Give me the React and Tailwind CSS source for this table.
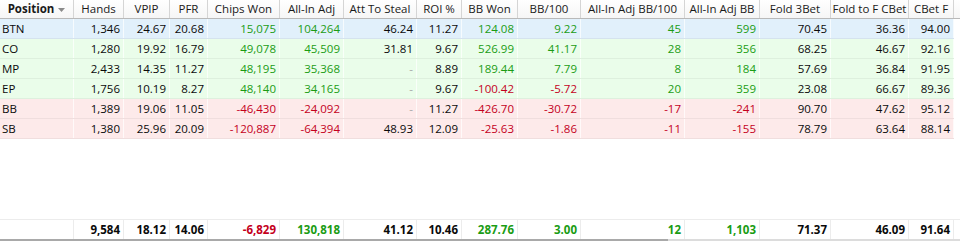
import React from "react";

const cols = [
  { label: "Position", w: "w-[74px]" },
  { label: "Hands", w: "w-[50px]" },
  { label: "VPIP", w: "w-[46px]" },
  { label: "PFR", w: "w-[38px]" },
  { label: "Chips Won", w: "w-[72px]" },
  { label: "All-In Adj", w: "w-[64px]" },
  { label: "Att To Steal", w: "w-[73px]" },
  { label: "ROI %", w: "w-[45px]" },
  { label: "BB Won", w: "w-[56px]" },
  { label: "BB/100", w: "w-[63px]" },
  { label: "All-In Adj BB/100", w: "w-[104px]" },
  { label: "All-In Adj BB", w: "w-[75px]" },
  { label: "Fold 3Bet", w: "w-[71px]" },
  { label: "Fold to F CBet", w: "w-[78px]" },
  { label: "CBet F", w: "w-[45px]" },
];

// g = green, r = red, d = dash, plain = black
const rows = [
  {
    pos: "BTN",
    bg: "bg-[#e1f0fb]",
    cells: ["1,346", "24.67", "20.68", "g15,075", "g104,264", "46.24", "11.27", "g124.08", "g9.22", "g45", "g599", "70.45", "36.36", "94.00"],
  },
  {
    pos: "CO",
    bg: "bg-[#eafdea]",
    cells: ["1,280", "19.92", "16.79", "g49,078", "g45,509", "31.81", "9.67", "g526.99", "g41.17", "g28", "g356", "68.25", "46.67", "92.16"],
  },
  {
    pos: "MP",
    bg: "bg-[#eafdea]",
    cells: ["2,433", "14.35", "11.27", "g48,195", "g35,368", "d", "8.89", "g189.44", "g7.79", "g8", "g184", "57.69", "36.84", "91.95"],
  },
  {
    pos: "EP",
    bg: "bg-[#eafdea]",
    cells: ["1,756", "10.19", "8.27", "g48,140", "g34,165", "d", "9.67", "r-100.42", "r-5.72", "g20", "g359", "23.08", "66.67", "89.36"],
  },
  {
    pos: "BB",
    bg: "bg-[#fdeaea]",
    cells: ["1,389", "19.06", "11.05", "r-46,430", "r-24,092", "d", "11.27", "r-426.70", "r-30.72", "r-17", "r-241", "90.70", "47.62", "95.12"],
  },
  {
    pos: "SB",
    bg: "bg-[#fdeaea]",
    cells: ["1,380", "25.96", "20.09", "r-120,887", "r-64,394", "48.93", "12.09", "r-25.63", "r-1.86", "r-11", "r-155", "78.79", "63.64", "88.14"],
  },
];

const totals = ["9,584", "18.12", "14.06", "r-6,829", "g130,818", "41.12", "10.46", "g287.76", "g3.00", "g12", "g1,103", "71.37", "46.09", "91.64"];

function Value({ v }) {
  if (v === "d") return <span className="text-[#a8a8a8]">-</span>;
  if (v[0] === "g") return <span className="text-[#1a9c14]">{v.slice(1)}</span>;
  if (v[0] === "r") return <span className="text-[#c4001c]">{v.slice(1)}</span>;
  return <span className="text-[#0a0a0a]">{v}</span>;
}

function App() {
  return (
    <div
      className="w-[960px] h-[241px] flex flex-col bg-white text-[11.5px] leading-none overflow-hidden"
      style={{ fontFamily: '"Open Sans", "Liberation Sans", sans-serif' }}
    >
      {/* header */}
      <div className="flex h-[19px] shrink-0 border-b border-[#b9b9b9] bg-gradient-to-b from-white to-[#f6f6f6]">
        {cols.map((c, i) => (
          <div
            key={c.label}
            className={`${c.w} shrink-0 flex items-center justify-center border-r border-[#d5d5d5] text-[#1a1a1a] whitespace-nowrap`}
          >
            {i === 0 ? (
              <>
                <span className="font-bold">{c.label}</span>
                <svg width="7" height="4" viewBox="0 0 7 4" className="ml-[4px] mt-[1px]">
                  <path d="M0 0 L7 0 L3.5 4 Z" fill="#8a8a8a" />
                </svg>
              </>
            ) : (
              c.label
            )}
          </div>
        ))}
        <div className="flex-1" />
      </div>

      {/* rows */}
      {rows.map((r) => (
        <div key={r.pos} className="flex h-[20px] shrink-0">
          <div className={`flex ${r.bg} border-b border-black/[0.05]`}>
            <div className="w-[74px] shrink-0 flex items-center pl-[2px] border-r border-white/70 text-[#0a0a0a]">
              {r.pos}
            </div>
            {r.cells.map((v, i) => (
              <div
                key={i}
                className={`${cols[i + 1].w} shrink-0 flex items-center justify-end pr-[3px] border-r border-white/70`}
              >
                <Value v={v} />
              </div>
            ))}
          </div>
        </div>
      ))}

      <div className="flex-1" />

      {/* totals */}
      <div className="flex h-[20px] shrink-0 border-t border-[#ececec] font-bold">
        <div className="w-[74px] shrink-0 border-r border-[#ececec]" />
        {totals.map((v, i) => (
          <div
            key={i}
            className={`${cols[i + 1].w} shrink-0 flex items-center justify-end pr-[3px] border-r border-[#ececec]`}
          >
            <Value v={v} />
          </div>
        ))}
      </div>

      {/* scrollbar edge */}
      <div className="flex h-[2px] shrink-0">
        <div className="w-[668px] bg-[#a9a9a9]" />
        <div className="flex-1 bg-[#dcdcdc]" />
      </div>
    </div>
  );
}

export default App;
